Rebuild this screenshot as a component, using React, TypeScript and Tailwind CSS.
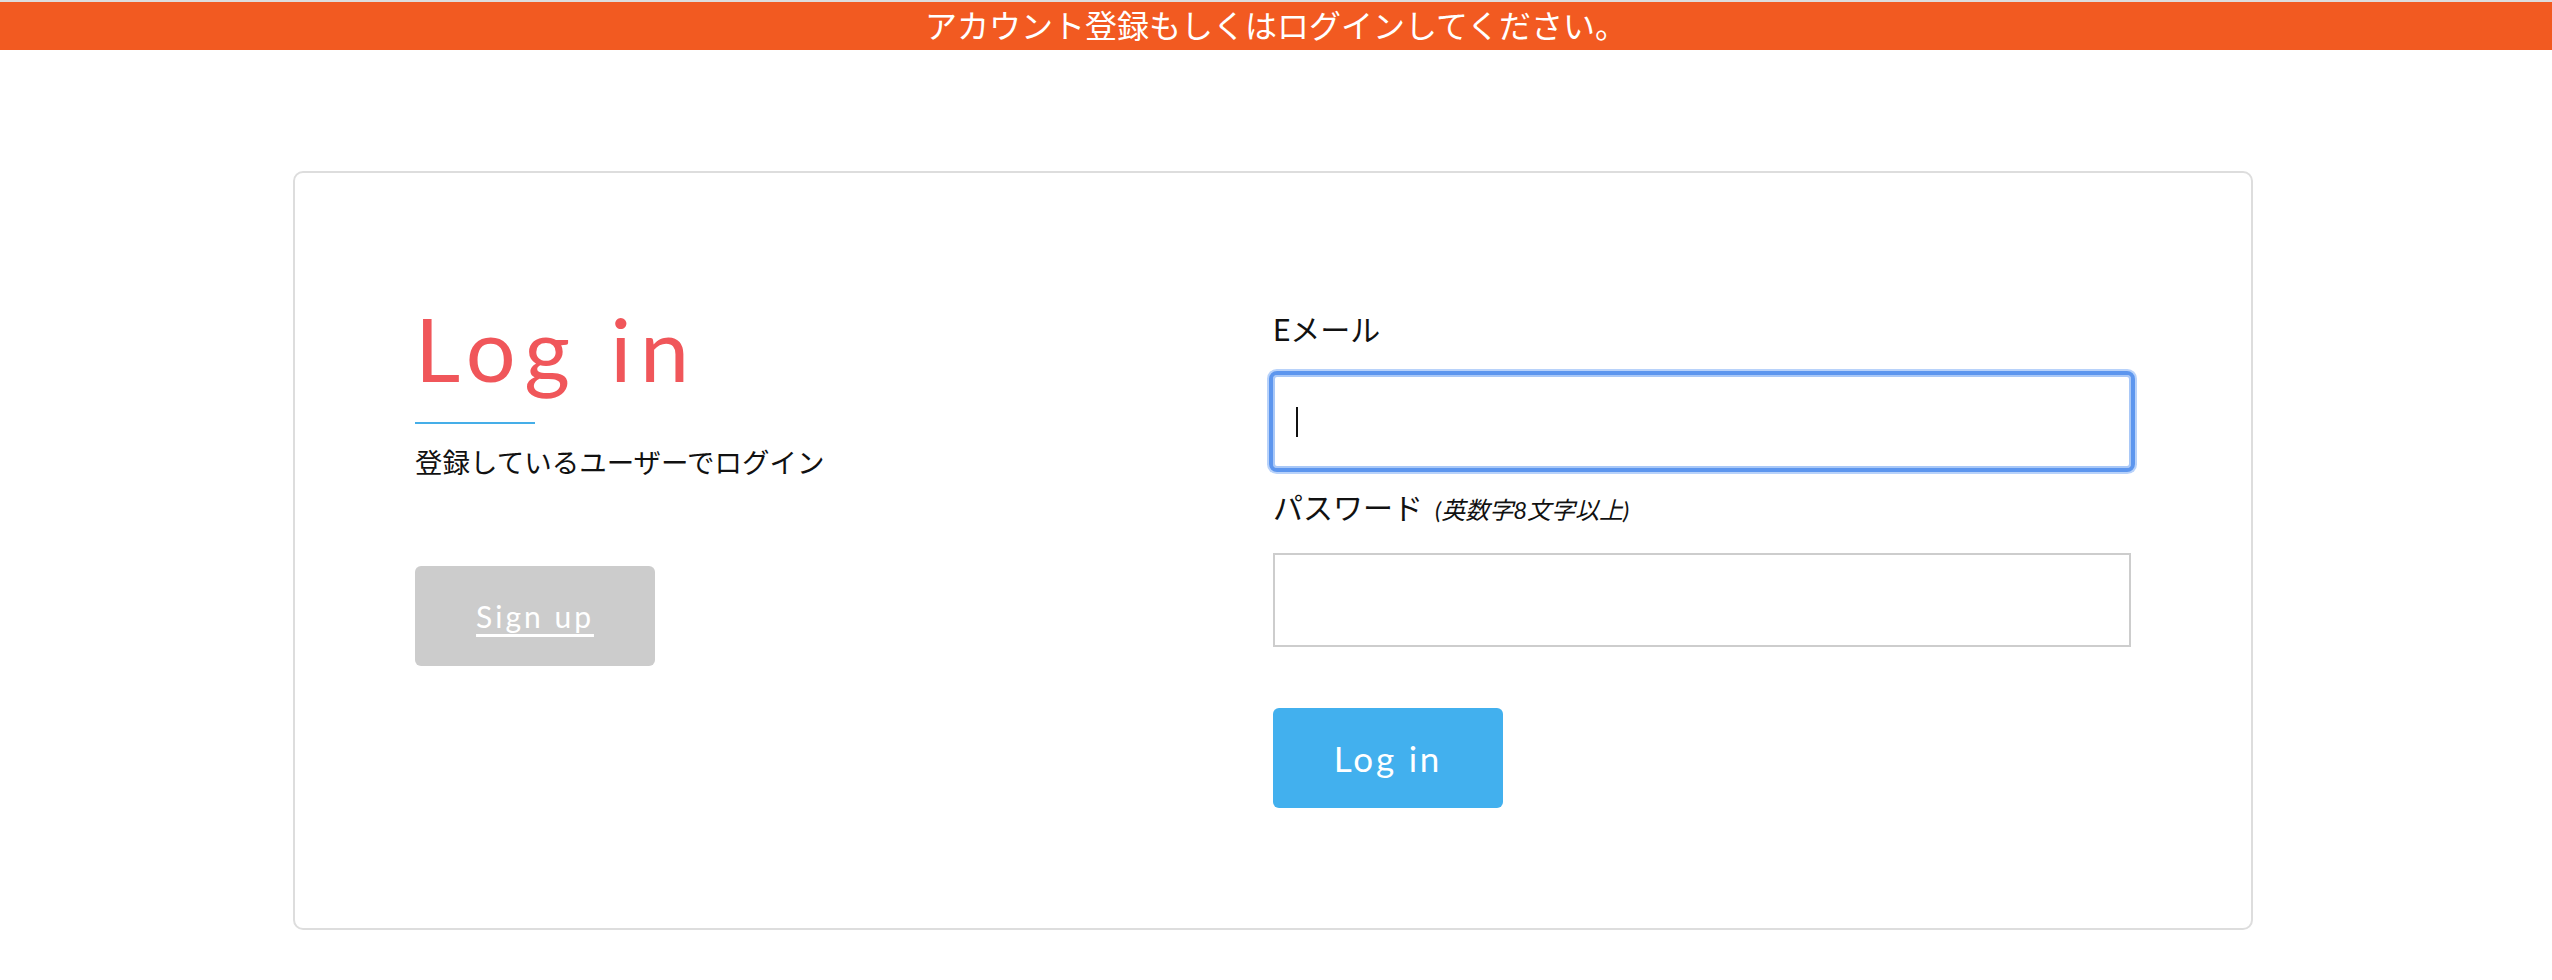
import { useState } from "react";

// Login card: notice bar on top, title + sign up on the left, form on the right
export default function App() {
  const [email, setEmail] = useState("");
  const [password, setPassword] = useState("");

  return (
    <div className="min-h-screen bg-white font-['Lato','Noto_Sans_CJK_JP',sans-serif] text-[#111111]">
      <div className="h-[2px] bg-[#dddddd]" />
      <div className="flex h-[48px] items-center justify-center bg-[#f25a21] text-[32px] leading-none text-white">
        アカウント登録もしくはログインしてください。
      </div>

      <div className="ml-[293px] mt-[121px] grid h-[759px] w-[1960px] grid-cols-2 rounded-[10px] border-2 border-[#dddddd] px-[120px] pt-[131px]">
        {/* left column */}
        <div className="flex flex-col items-start">
          <h1 className="text-[88px] font-normal leading-none tracking-[0.1em] text-[#f0565a]">
            Log in
          </h1>
          <div className="mt-[30px] h-[2px] w-[120px] bg-[#45aee8]" />
          <p className="mt-[25px] text-[27.5px] leading-[28px]">
            登録しているユーザーでログイン
          </p>
          <a
            href="#"
            className="mt-[89px] flex h-[100px] w-[240px] items-center justify-center rounded-[6px] bg-[#cccccc] text-[30px] tracking-[0.1em] text-white underline underline-offset-[6px]"
          >
            Sign up
          </a>
        </div>

        {/* right column */}
        <form className="flex flex-col pt-[10px]" onSubmit={(e) => e.preventDefault()}>
          <label className="text-[30px] leading-[30px]">Eメール</label>
          <div className="relative mt-[31px]">
            <input
              type="email"
              value={email}
              onChange={(e) => setEmail(e.target.value)}
              className="block h-[93px] w-full rounded-[4px] border-2 border-[#a9c8f7] px-[22px] text-[30px] shadow-[0_0_0_6px_#b8d2fa] outline outline-[4px] outline-[#5d96ee]"
            />
            <span className="pointer-events-none absolute left-[23px] top-[32px] h-[30px] w-[2px] bg-[#111111]" />
          </div>

          <label className="mt-[24px] flex items-baseline text-[30px] leading-[30px]">
            パスワード
            <span className="ml-[12px] text-[24px] italic">(英数字8文字以上)</span>
          </label>
          <input
            type="password"
            value={password}
            onChange={(e) => setPassword(e.target.value)}
            className="mt-[28px] block h-[94px] w-full border-2 border-[#cdcdcd] px-[22px] text-[30px] outline-none"
          />

          <button
            type="submit"
            className="mt-[61px] h-[100px] w-[230px] rounded-[6px] bg-[#42b0ee] text-[35px] tracking-[0.08em] text-white"
          >
            Log in
          </button>
        </form>
      </div>
    </div>
  );
}
